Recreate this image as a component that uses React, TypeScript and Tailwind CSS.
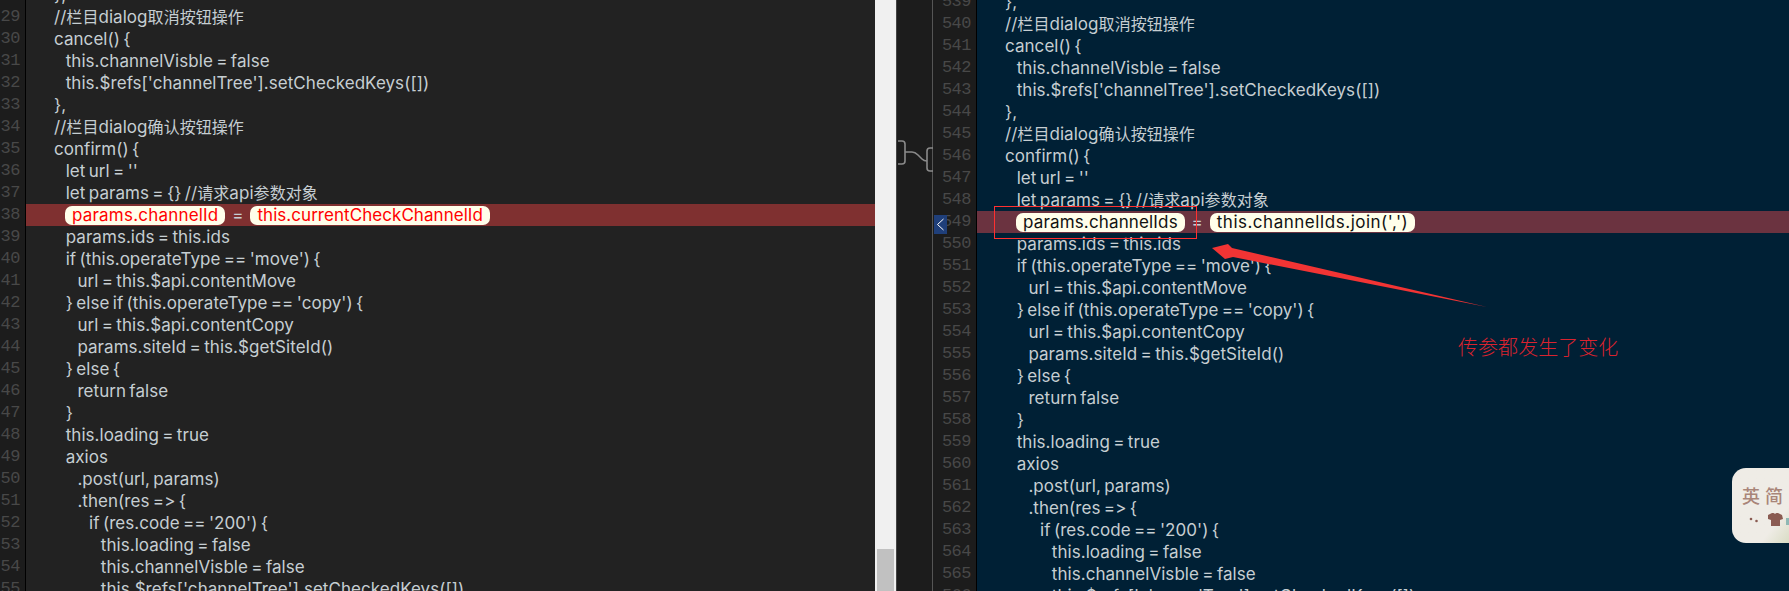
import React from "react";

const rows: [number, string][] = [
  [1, "},"],
  [1, "//栏目dialog取消按钮操作"],
  [1, "cancel() {"],
  [2, "this.channelVisble = false"],
  [2, "this.$refs['channelTree'].setCheckedKeys([])"],
  [1, "},"],
  [1, "//栏目dialog确认按钮操作"],
  [1, "confirm() {"],
  [2, "let url = ''"],
  [2, "let params = {} //请求api参数对象"],
  [2, "@@"],
  [2, "params.ids = this.ids"],
  [2, "if (this.operateType == 'move') {"],
  [3, "url = this.$api.contentMove"],
  [2, "} else if (this.operateType == 'copy') {"],
  [3, "url = this.$api.contentCopy"],
  [3, "params.siteId = this.$getSiteId()"],
  [2, "} else {"],
  [3, "return false"],
  [2, "}"],
  [2, "this.loading = true"],
  [2, "axios"],
  [3, ".post(url, params)"],
  [3, ".then(res => {"],
  [4, "if (res.code == '200') {"],
  [5, "this.loading = false"],
  [5, "this.channelVisble = false"],
  [5, "this.$refs['channelTree'].setCheckedKeys([])"],
];

function Gutter({ start }: { start: number }) {
  return (
    <>
      {rows.map((_, k) => (
        <div
          key={k}
          className="h-[22px] text-right font-['Liberation_Mono',monospace] text-[17px] leading-[22px] tracking-[-0.5px] text-[#484848]"
        >
          {start + k}
        </div>
      ))}
    </>
  );
}

function Pill({ children, className }: { children: React.ReactNode; className: string }) {
  return (
    <span className={`flex h-[19px] items-center rounded-[7px] bg-[#fffeea] px-[7px] ${className}`}>
      {children}
    </span>
  );
}

// Chinese runs are set a little smaller than the Latin code text, as in the picture.
function Mixed({ text }: { text: string }) {
  return (
    <>
      {text.split(/([\u4e00-\u9fff]+)/).map((part, k) =>
        k % 2 === 1 ? (
          <span key={k} className="text-[16px]">
            {part}
          </span>
        ) : (
          <span key={k}>{part}</span>
        )
      )}
    </>
  );
}

function Code({ hl, band }: { hl: React.ReactNode; band: string }) {
  return (
    <>
      {rows.map(([i, t], k) =>
        t === "@@" ? (
          <div key={k} className={`flex h-[22px] items-center whitespace-pre pl-[39px] ${band}`}>
            {hl}
          </div>
        ) : (
          <div key={k} className="h-[22px] whitespace-pre" style={{ paddingLeft: 28 + (i - 1) * 11.7 }}>
            <Mixed text={t} />
          </div>
        )
      )}
    </>
  );
}

export default function App() {
  return (
    <div className="relative flex h-[591px] w-[1789px] overflow-hidden bg-[#002035] font-['Inter','Noto_Sans_CJK_SC',sans-serif] text-[17px] leading-[22px] tracking-[0.05px] text-[#c6ced2] [word-spacing:-1.5px] [font-feature-settings:'calt'_0,'liga'_0]">
      {/* left pane */}
      <div className="flex h-full w-[875px] shrink-0 overflow-hidden bg-[#222222]">
        <div className="mt-[-16px] w-[26px] shrink-0 border-r border-black bg-[#1c1c1c] pr-[5px]">
          <Gutter start={28} />
        </div>
        <div className="mt-[-16px] min-w-0 flex-1">
          <Code
            band="bg-[#7f3030]"
            hl={
              <>
                <Pill className="tracking-[0.2px] text-[#ff0000]">params.channelId</Pill>
                <span className="w-[25px] text-center">=</span>
                <Pill className="text-[#ff0000]">this.currentCheckChannelId</Pill>
              </>
            }
          />
        </div>
      </div>

      {/* scrollbar */}
      <div className="flex h-full w-[21px] shrink-0 flex-col justify-end bg-[#f0f0f0] px-[2px]">
        <div className="h-[42px] bg-[#c1c1c1]" />
      </div>

      {/* connector strip */}
      <div className="h-full w-[37px] shrink-0 border-r border-[#555555] border-l border-l-[#444444] bg-[#1c1c1c]" />

      {/* right pane */}
      <div className="flex h-full flex-1 overflow-hidden">
        <div className="mt-[-9px] w-[44px] shrink-0 border-r border-black bg-[#1c1c1c] pr-[5px]">
          <Gutter start={539} />
        </div>
        <div className="mt-[-9px] min-w-0 flex-1 bg-[#002035]">
          <Code
            band="bg-[#6b3340]"
            hl={
              <>
                <Pill className="tracking-[0.15px] text-[#111111]">params.channelIds</Pill>
                <span className="w-[25px] text-center">=</span>
                <Pill className="tracking-[0.5px] text-[#111111]">this.channelIds.join(',')</Pill>
              </>
            }
          />
        </div>
      </div>

      {/* merge connector between the panes */}
      <svg className="absolute left-[897px] top-[138px]" width="38" height="38" viewBox="0 0 38 38" fill="none" stroke="#8a8a8a" strokeWidth="1.6">
        <path d="M1 3h4q3 0 3 3v17q0 3-3 3H1" />
        <path d="M8 14h7q3 0 6 3l4 4q2 2 5 2" />
        <path d="M36 10h-3q-3 0-3 3v17q0 3 3 3h3" />
      </svg>

      {/* merge arrow button */}
      <div className="absolute left-[934px] top-[215px] flex h-[19px] w-[13px] items-center justify-center bg-[#1f3f7a]">
        <svg width="9" height="13" viewBox="0 0 9 13" fill="none" stroke="#ffffff" strokeWidth="1">
          <path d="M7.5 1 1.5 6.5l6 5.5" />
        </svg>
      </div>

      {/* annotation: box, arrow, label */}
      <div className="absolute left-[994px] top-[206px] h-[33px] w-[203px] border border-[#ff3030]" />
      <svg className="absolute left-[1205px] top-[238px]" width="290" height="75" viewBox="0 0 290 75" fill="#f23434">
        <path d="M7 10 23 6 27 10 282 69 28 19 20 21Z" />
      </svg>
      <div className="absolute left-[1458px] top-[333px] font-['Noto_Sans_CJK_SC',sans-serif] text-[20px] leading-[28px] font-light text-[#d9232f]">
        传参都发生了变化
      </div>

      {/* floating language badge */}
      <div className="absolute right-0 top-[468px] flex h-[75px] w-[57px] flex-col overflow-hidden rounded-l-[14px] bg-linear-to-br from-[#efece6] from-75% to-[#d9dcc4] pl-[10px] pt-[17px]">
        <div className="flex gap-[5px] font-['Noto_Sans_CJK_SC',sans-serif] text-[18px] leading-[20px] font-medium text-[#a98579]">
          <span>英</span>
          <span>简</span>
        </div>
        <svg className="mt-[7px]" width="47" height="16" viewBox="0 0 47 16" fill="#8a5b52">
          <circle cx="9" cy="7" r="1.3" />
          <circle cx="14.5" cy="9" r="1.3" />
          <path d="M26 3l4-2h1.5q1.5 1.5 3 0H36l4 2 1 4-3 1v6H29V8l-3-1z" />
          <rect x="44" y="6" width="3" height="7" fill="#8fb8b4" />
        </svg>
      </div>
    </div>
  );
}
